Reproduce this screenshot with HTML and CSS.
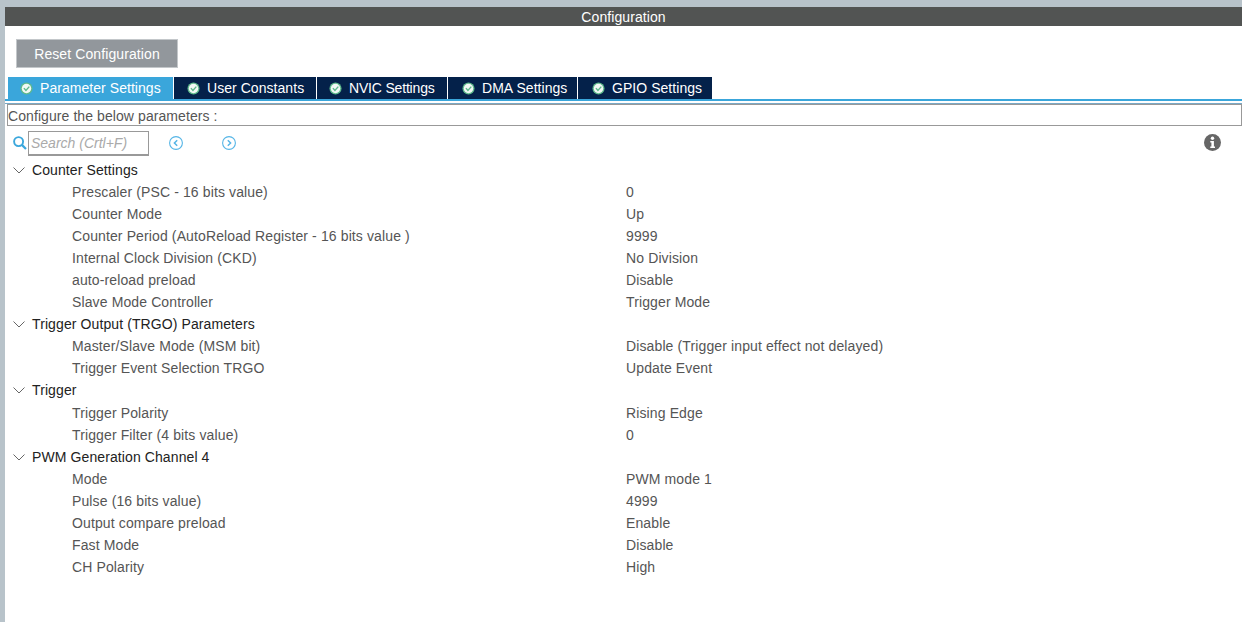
FILE: index.html
```html
<!DOCTYPE html>
<html lang="en">
<head>
  <meta charset="UTF-8" />
  <title>Configuration</title>
  <link rel="stylesheet" href="styles.css">
</head>
<body>
  <div class="top-strip"></div>
  <div class="main">
    <div class="title-bar">Configuration</div>

    <!-- Reset -->
    <div class="reset-row">
      <button class="reset-btn">Reset Configuration</button>
    </div>

    <!-- Tabs -->
    <div class="tabs">
      <div class="tab active"><svg class="check" viewBox="0 0 14 14"><circle cx="7" cy="7" r="6.5" fill="#5fb98c"/><circle cx="7" cy="7" r="5.1" fill="#f2f9f5"/><path d="M4.2 6.6 L6.4 9.2 L10 5" fill="none" stroke="#5fb98c" stroke-width="1.5"/></svg>Parameter Settings</div>
      <div class="tab"><svg class="check" viewBox="0 0 14 14"><circle cx="7" cy="7" r="6.5" fill="#5fb98c"/><circle cx="7" cy="7" r="5.1" fill="#f2f9f5"/><path d="M4.2 6.6 L6.4 9.2 L10 5" fill="none" stroke="#5fb98c" stroke-width="1.5"/></svg>User Constants</div>
      <div class="tab"><svg class="check" viewBox="0 0 14 14"><circle cx="7" cy="7" r="6.5" fill="#5fb98c"/><circle cx="7" cy="7" r="5.1" fill="#f2f9f5"/><path d="M4.2 6.6 L6.4 9.2 L10 5" fill="none" stroke="#5fb98c" stroke-width="1.5"/></svg>NVIC Settings</div>
      <div class="tab"><svg class="check" viewBox="0 0 14 14"><circle cx="7" cy="7" r="6.5" fill="#5fb98c"/><circle cx="7" cy="7" r="5.1" fill="#f2f9f5"/><path d="M4.2 6.6 L6.4 9.2 L10 5" fill="none" stroke="#5fb98c" stroke-width="1.5"/></svg>DMA Settings</div>
      <div class="tab"><svg class="check" viewBox="0 0 14 14"><circle cx="7" cy="7" r="6.5" fill="#5fb98c"/><circle cx="7" cy="7" r="5.1" fill="#f2f9f5"/><path d="M4.2 6.6 L6.4 9.2 L10 5" fill="none" stroke="#5fb98c" stroke-width="1.5"/></svg>GPIO Settings</div>
    </div>
    <div class="tab-rule"></div>

    <div class="hint">Configure the below parameters :</div>

    <!-- Search row -->
    <div class="search-row">
      <svg class="search-icon" viewBox="0 0 14 14"><circle cx="5.6" cy="5.6" r="4.5" fill="none" stroke="#3ba7dc" stroke-width="1.9"/><path d="M8.9 8.9 L13 13" stroke="#3ba7dc" stroke-width="2.2"/></svg>
      <div class="search-box">Search (Crtl+F)</div>
      <svg class="nav-icon first" viewBox="0 0 14 14"><circle cx="7" cy="7" r="6.4" fill="none" stroke="#55b5e6" stroke-width="1.1"/><path d="M8.2 4.2 L5.4 7 L8.2 9.8" fill="none" stroke="#55b5e6" stroke-width="1.5"/></svg>
      <svg class="nav-icon" viewBox="0 0 14 14"><circle cx="7" cy="7" r="6.4" fill="none" stroke="#55b5e6" stroke-width="1.1"/><path d="M5.8 4.2 L8.6 7 L5.8 9.8" fill="none" stroke="#55b5e6" stroke-width="1.5"/></svg>
      <svg class="info-icon" viewBox="0 0 17 17"><circle cx="8.5" cy="8.5" r="8.5" fill="#666"/><circle cx="8.5" cy="4.2" r="1.7" fill="#fff"/><path d="M6.3 7 H9.9 V12.4 H11 V14 H6.3 V12.4 H7.4 V8.6 H6.3 Z" fill="#fff"/></svg>
    </div>

    <!-- Parameter tree -->
    <div class="group"><svg class="chevron" viewBox="0 0 12 7"><path d="M0.5 0.5 L6 6 L11.5 0.5" fill="none" stroke="#666" stroke-width="1"/></svg>Counter Settings</div>
    <div class="param"><span class="param-name">Prescaler (PSC - 16 bits value)</span><span class="param-value">0</span></div>
    <div class="param"><span class="param-name">Counter Mode</span><span class="param-value">Up</span></div>
    <div class="param"><span class="param-name">Counter Period (AutoReload Register - 16 bits value )</span><span class="param-value">9999</span></div>
    <div class="param"><span class="param-name">Internal Clock Division (CKD)</span><span class="param-value">No Division</span></div>
    <div class="param"><span class="param-name">auto-reload preload</span><span class="param-value">Disable</span></div>
    <div class="param"><span class="param-name">Slave Mode Controller</span><span class="param-value">Trigger Mode</span></div>

    <div class="group"><svg class="chevron" viewBox="0 0 12 7"><path d="M0.5 0.5 L6 6 L11.5 0.5" fill="none" stroke="#666" stroke-width="1"/></svg>Trigger Output (TRGO) Parameters</div>
    <div class="param"><span class="param-name">Master/Slave Mode (MSM bit)</span><span class="param-value">Disable (Trigger input effect not delayed)</span></div>
    <div class="param"><span class="param-name">Trigger Event Selection TRGO</span><span class="param-value">Update Event</span></div>

    <div class="group"><svg class="chevron" viewBox="0 0 12 7"><path d="M0.5 0.5 L6 6 L11.5 0.5" fill="none" stroke="#666" stroke-width="1"/></svg>Trigger</div>
    <div class="param tall"><span class="param-name">Trigger Polarity</span><span class="param-value">Rising Edge</span></div>
    <div class="param"><span class="param-name">Trigger Filter (4 bits value)</span><span class="param-value">0</span></div>

    <div class="group"><svg class="chevron" viewBox="0 0 12 7"><path d="M0.5 0.5 L6 6 L11.5 0.5" fill="none" stroke="#666" stroke-width="1"/></svg>PWM Generation Channel 4</div>
    <div class="param"><span class="param-name">Mode</span><span class="param-value">PWM mode 1</span></div>
    <div class="param"><span class="param-name">Pulse (16 bits value)</span><span class="param-value">4999</span></div>
    <div class="param"><span class="param-name">Output compare preload</span><span class="param-value">Enable</span></div>
    <div class="param"><span class="param-name">Fast Mode</span><span class="param-value">Disable</span></div>
    <div class="param"><span class="param-name">CH Polarity</span><span class="param-value">High</span></div>
  </div>
</body>
</html>
```

FILE: styles.css
```css
/* Global Styles */
body {
  margin: 0;
  padding-left: 5px;
  box-sizing: border-box;
  height: 622px;
  overflow: hidden;
  background: #b8c3ca;
  font-family: 'Liberation Sans', Arial, sans-serif;
  font-size: 14px;
  color: #333;
}
.top-strip {
  height: 7px;
}
.main {
  background: #fff;
  height: 615px;
}
.title-bar {
  height: 19px;
  line-height: 20px;
  background: #525453;
  color: #fff;
  text-align: center;
  font-size: 14px;
  letter-spacing: 0.08px;
}
/* Reset button */
.reset-row {
  padding: 13px 0 0 11px;
  height: 32px;
}
.reset-btn {
  display: block;
  width: 162px;
  height: 29px;
  padding: 0;
  background: #92979c;
  border: 1px solid #c3c7ca;
  color: #fff;
  font-family: inherit;
  font-size: 14px;
  letter-spacing: 0.1px;
}
/* Tabs */
.tabs {
  display: flex;
  margin-top: 6px;
  padding-left: 3px;
  height: 22px;
}
.tab {
  display: flex;
  align-items: center;
  height: 22px;
  background: #04214a;
  color: #fff;
  padding-left: 13px;
  border-right: 1px solid #fff;
  box-sizing: border-box;
  letter-spacing: 0.05px;
}
.tab:nth-child(1) { width: 166px; padding-left: 12px; }
.tab:nth-child(2) { width: 143px; }
.tab:nth-child(3) { width: 131px; padding-left: 12px; letter-spacing: -0.18px; }
.tab:nth-child(4) { width: 130px; padding-left: 14px; }
.tab:nth-child(5) { width: 134px; padding-left: 14px; border-right: 0; }
.tab.active {
  background: #3aa6db;
}
.check {
  width: 13px;
  height: 13px;
  margin-right: 7px;
  flex: none;
}
.tab-rule {
  height: 2px;
  border-top: 2px solid #3aa6db;
  border-bottom: 1px solid #7aa9c6;
}
/* Hint box */
.hint {
  height: 20px;
  line-height: 23px;
  margin-left: 2px;
  border: 1px solid #999;
  color: #555;
  letter-spacing: 0.08px;
}
/* Search row */
.search-row {
  display: flex;
  align-items: center;
  height: 26px;
  margin: 4px 0 3px;
  padding-left: 8px;
  position: relative;
}
.search-icon {
  width: 14px;
  height: 14px;
  margin-right: 1px;
}
.search-box {
  width: 117px;
  height: 22px;
  line-height: 22px;
  border: 1px solid #999;
  border-bottom-width: 2px;
  padding-left: 2px;
  font-style: italic;
  color: #aaa;
}
.nav-icon {
  width: 14px;
  height: 14px;
  margin-left: 39px;
}
.nav-icon.first {
  margin-left: 20px;
}
.info-icon {
  width: 17px;
  height: 17px;
  position: absolute;
  right: 21px;
  top: 4px;
}
/* Parameter tree */
.group {
  display: flex;
  align-items: center;
  height: 22px;
  color: #222;
  padding-left: 8px;
  letter-spacing: 0.1px;
}
.chevron {
  width: 12px;
  height: 7px;
  margin-right: 7px;
  flex: none;
}
.param {
  display: flex;
  height: 22px;
  line-height: 22px;
  color: #555;
  letter-spacing: 0.12px;
}
.param.tall {
  height: 23px;
  line-height: 24px;
}
.param-name {
  width: 554px;
  padding-left: 67px;
  flex: none;
}
```
